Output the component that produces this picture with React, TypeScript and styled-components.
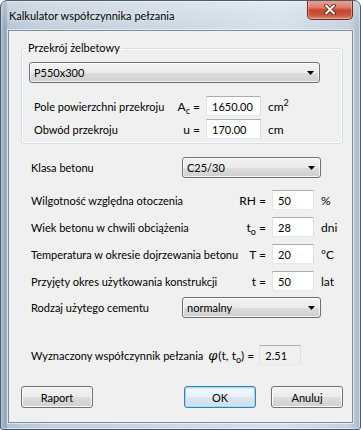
import styled, { createGlobalStyle, css } from 'styled-components'

const GlobalStyle = createGlobalStyle`
  html, body {
    margin: 0;
    padding: 0;
    background: #ffffff;
  }
  body {
    font-family: Lato, "Liberation Sans", sans-serif;
    font-size: 11px;
    color: #000;
  }
`

export default function App() {
  return (
    <>
      <GlobalStyle />
      <Window>
        <TitleBar>
          <Title>Kalkulator współczynnika pełzania</Title>
          <CloseButton aria-label="Zamknij">
            <svg width="12" height="11" viewBox="0 0 12 11">
              <path d="M2 1.5 L10 9.5 M10 1.5 L2 9.5" stroke="#4a1a14" strokeWidth="3.6" strokeLinecap="round" />
              <path d="M2 1.5 L10 9.5 M10 1.5 L2 9.5" stroke="#ffffff" strokeWidth="2" strokeLinecap="round" />
            </svg>
          </CloseButton>
        </TitleBar>

        <Client>
          <Group>
            <Legend>Przekrój żelbetowy</Legend>
            <Combo>
              <span>P550x300</span>
              <Arrow />
            </Combo>
            {sectionRows.map((r) => (
              <SectionRow key={r.label} $top={r.top}>
                <Label>{r.label}</Label>
                <Sym>{r.sym}</Sym>
                <Field>{r.value}</Field>
                <Unit>{r.unit}</Unit>
              </SectionRow>
            ))}
          </Group>

          <ComboRow $top={13}>
            <Label>Klasa betonu</Label>
            <Combo>
              <span>C25/30</span>
              <Arrow />
            </Combo>
          </ComboRow>

          {params.map((p) => (
            <ParamRow key={p.label} $top={p.top}>
              <Label>{p.label}</Label>
              <Sym>{p.sym}</Sym>
              <Field>{p.value}</Field>
              <Unit>{p.unit}</Unit>
            </ParamRow>
          ))}

          <ComboRow $top={6}>
            <Label>Rodzaj użytego cementu</Label>
            <Combo>
              <span>normalny</span>
              <Arrow />
            </Combo>
          </ComboRow>

          <ResultRow>
            <Label>Wyznaczony współczynnik pełzania</Label>
            <Sym>
              <Phi>φ</Phi>(t, t<Sub>o</Sub>) =
            </Sym>
            <Field $readOnly>2.51</Field>
          </ResultRow>

          <ButtonBar>
            <Button>Raport</Button>
            <Spacer />
            <Button $primary>OK</Button>
            <Button>Anuluj</Button>
          </ButtonBar>
        </Client>
      </Window>
    </>
  )
}

function Arrow() {
  return (
    <svg width="7" height="4" viewBox="0 0 7 4">
      <path d="M0 0 H7 L3.5 4 Z" fill="#000" />
    </svg>
  )
}

const Window = styled.div`
  box-sizing: border-box;
  width: 361px;
  height: 430px;
  display: flex;
  flex-direction: column;
  border: 1px solid #4a5b6d;
  border-radius: 7px 7px 3px 3px;
  background:
    linear-gradient(180deg, rgba(255, 255, 255, 0.3) 0, rgba(255, 255, 255, 0) 28px),
    linear-gradient(
      90deg,
      #7d95ac 0,
      #a9bbcc 2px,
      #8aa1b7 4px,
      #b6c6d6 7px,
      #c2cfdc 12%,
      #cbd7e3 45%,
      #d6e0ea 78%,
      #c4d2df 97%,
      #a9bacb 100%
    );
  box-shadow: inset 0 0 0 1px rgba(255, 255, 255, 0.45);
  overflow: hidden;
`

const TitleBar = styled.div`
  height: 29px;
  flex: none;
  display: flex;
  align-items: flex-start;
  padding-left: 8px;
`

const Title = styled.div`
  margin-top: 7px;
  font-size: 11px;
  line-height: 15px;
  color: #000;
  text-shadow: 0 0 5px rgba(255, 255, 255, 0.8);
`

const CloseButton = styled.button`
  margin-left: auto;
  margin-right: 7px;
  margin-top: -1px;
  width: 46px;
  height: 20px;
  padding: 0;
  display: flex;
  align-items: center;
  justify-content: center;
  border: 1px solid #6b2b22;
  border-top: none;
  border-radius: 0 0 5px 5px;
  background: linear-gradient(
    180deg,
    #e9a595 0%,
    #dd7d68 40%,
    #c7462f 52%,
    #c9533c 78%,
    #de8a70 100%
  );
  box-shadow: inset 0 0 0 1px rgba(255, 210, 200, 0.45);
`

const Client = styled.div`
  flex: 1;
  margin: 0 7px 6px 7px;
  display: flex;
  flex-direction: column;
  padding: 10px 9px 11px 12px;
  background: #f0f0f0;
  border: 1px solid #7b8ea2;
  box-shadow: 0 0 0 1px rgba(255, 255, 255, 0.55);
`

const Group = styled.fieldset`
  margin: 0;
  padding: 7px 22px 4px 7px;
  border: 1px solid #d5dfe5;
  border-radius: 3px;
  box-shadow: inset 0 0 0 1px #ffffff;
  min-width: 0;
`

const Legend = styled.legend`
  margin-left: -3px;
  padding: 0 2px;
  line-height: 14px;
  font-size: 11px;
`

const Combo = styled.div`
  box-sizing: border-box;
  height: 21px;
  display: flex;
  align-items: center;
  justify-content: space-between;
  padding: 0 5px 0 4px;
  border: 1px solid #707070;
  border-radius: 3px;
  background: linear-gradient(180deg, #f2f2f2 0%, #ebebeb 50%, #dddddd 51%, #cfcfcf 100%);
  box-shadow: inset 0 0 0 1px rgba(255, 255, 255, 0.7);
`

const rowBase = css<{ $top: number }>`
  display: grid;
  align-items: center;
  height: 20px;
  margin-top: ${({ $top }) => $top}px;
`

const SectionRow = styled.div<{ $top: number }>`
  ${rowBase};
  grid-template-columns: 1fr auto 55px 53px;
  column-gap: 6px;
  padding-left: 5px;
`

const ParamRow = styled.div<{ $top: number }>`
  ${rowBase};
  grid-template-columns: 1fr auto 42px 23px;
  column-gap: 6px;
  margin-left: 10px;
`

const ComboRow = styled.div<{ $top: number }>`
  ${rowBase};
  height: 21px;
  grid-template-columns: 151px 139px;
  margin-left: 10px;
`

const ResultRow = styled.div`
  display: grid;
  align-items: center;
  height: 20px;
  margin: 27px 0 0 10px;
  grid-template-columns: 1fr auto 42px 37px;
  column-gap: 5px;
`

const Label = styled.span`
  white-space: nowrap;
`

const Sym = styled.span`
  white-space: nowrap;
  text-align: right;
  font-size: 12px;
`

const Sub = styled.sub`
  font-size: 9px;
  vertical-align: -3px;
  line-height: 0;
`

const Sup = styled.sup`
  font-size: 9px;
  vertical-align: 5px;
  line-height: 0;
`

const Phi = styled.i`
  font-family: "DejaVu Serif", serif;
  font-size: 13px;
  margin-right: 1px;
`

const Unit = styled.span`
  padding-left: 1px;
  white-space: nowrap;
  font-size: 12px;
`

const Field = styled.div<{ $readOnly?: boolean }>`
  box-sizing: border-box;
  height: 20px;
  display: flex;
  align-items: center;
  padding-left: 5px;
  border: 1px solid;
  border-color: #abadb3 #dbdfe6 #e3e9ef #e2e3ea;
  background: ${({ $readOnly }) => ($readOnly ? '#f0f0f0' : '#ffffff')};
`

const ButtonBar = styled.div`
  margin-top: 21px;
  display: flex;
  gap: 15px;
`

const Spacer = styled.div`
  flex: 1;
`

const Button = styled.button<{ $primary?: boolean }>`
  width: 72px;
  height: 22px;
  padding: 0;
  font-family: inherit;
  font-size: 11px;
  color: #000;
  border: 1px solid #707070;
  border-radius: 3px;
  background: linear-gradient(180deg, #f2f2f2 0%, #ebebeb 50%, #dddddd 51%, #cfcfcf 100%);
  box-shadow: inset 0 0 0 1px #fcfcfc;

  ${({ $primary }) =>
    $primary &&
    css`
      border-color: #3c7fb1;
      background: linear-gradient(180deg, #f4f9fc 0%, #e8f1f7 50%, #d9e6ef 51%, #cfdfea 100%);
      box-shadow: inset 0 0 0 1px #9fdaf6, inset 0 0 0 2px rgba(200, 235, 250, 0.6);
    `}
`

const sectionRows = [
  { label: 'Pole powierzchni przekroju', sym: <>A<Sub>c</Sub> =</>, value: '1650.00', unit: <>cm<Sup>2</Sup></>, top: 13 },
  { label: 'Obwód przekroju', sym: <>u =</>, value: '170.00', unit: <>cm</>, top: 3 },
]

const params = [
  { label: 'Wilgotność względna otoczenia', sym: <>RH =</>, value: '50', unit: '%', top: 12 },
  { label: 'Wiek betonu w chwili obciążenia', sym: <>t<Sub>o</Sub> =</>, value: '28', unit: 'dni', top: 7 },
  { label: 'Temperatura w okresie dojrzewania betonu', sym: <>T =</>, value: '20', unit: '°C', top: 7 },
  { label: 'Przyjęty okres użytkowania konstrukcji', sym: <>t =</>, value: '50', unit: 'lat', top: 7 },
]
